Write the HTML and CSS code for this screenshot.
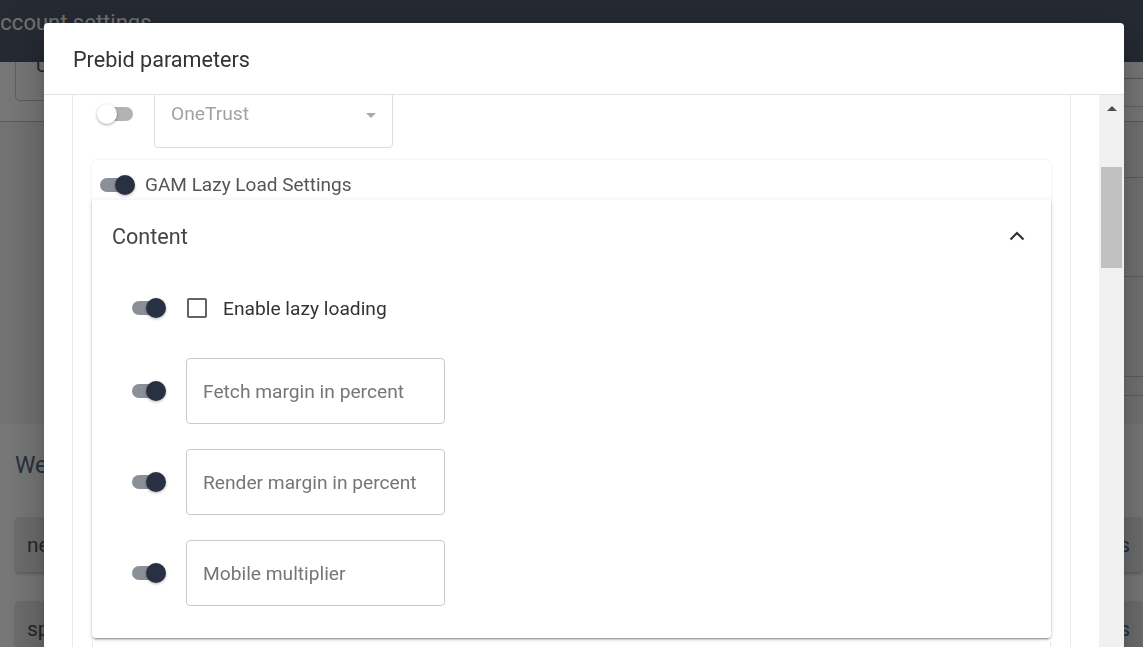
FILE: index.html
```html
<!DOCTYPE html>
<html lang="en">
<head>
<meta charset="utf-8">
<title>Prebid parameters</title>
<link rel="stylesheet" href="styles.css">
</head>
<body>
<div class="page">
  <header class="navbar"><span class="nav-title">Account settings</span></header>
  <div class="toolbar">
    <div class="tool-select"><span>Users</span></div>
    <div class="tool-right"></div>
  </div>
  <section class="settings-section">
    <div class="table">
      <div class="trow r1"></div>
      <div class="trow r2"></div>
      <div class="trow r3"></div>
      <div class="trow r4"></div>
    </div>
  </section>
  <section class="websites">
    <h2 class="websites-title">Websites</h2>
    <div class="site-item"><span class="site-name">news.example.com</span><span class="site-link">Settings</span></div>
    <div class="site-item"><span class="site-name">sport.example.com</span><span class="site-link">Settings</span></div>
  </section>
</div>

<div class="backdrop"></div>

<div class="dialog">
  <div class="dialog-header"><h1 class="dialog-title">Prebid parameters</h1></div>
  <div class="dialog-body">
    <div class="dialog-content">
      <div class="form-card">
        <div class="select-row">
          <div class="toggle off"><span class="track"></span><span class="knob"></span></div>
          <div class="select disabled">
            <span class="select-value">OneTrust</span>
            <span class="select-arrow"></span>
          </div>
        </div>

        <div class="gam-card">
          <div class="gam-header">
            <div class="toggle on wide"><span class="track"></span><span class="knob"></span></div>
            <span class="gam-label">GAM Lazy Load Settings</span>
          </div>
          <div class="panel">
            <div class="panel-header">
              <span class="panel-title">Content</span>
              <svg class="chevron" width="16" height="10" viewBox="0 0 16 10"><path d="M1.5 8.5 L8 2 L14.5 8.5" fill="none" stroke="#333" stroke-width="2.2"/></svg>
            </div>
            <div class="panel-body">
              <div class="field-row first">
                <div class="toggle on"><span class="track"></span><span class="knob"></span></div>
                <span class="checkbox"></span>
                <span class="check-label">Enable lazy loading</span>
              </div>
              <div class="field-row">
                <div class="toggle on"><span class="track"></span><span class="knob"></span></div>
                <input class="text-input" type="text" placeholder="Fetch margin in percent">
              </div>
              <div class="field-row">
                <div class="toggle on"><span class="track"></span><span class="knob"></span></div>
                <input class="text-input" type="text" placeholder="Render margin in percent">
              </div>
              <div class="field-row">
                <div class="toggle on"><span class="track"></span><span class="knob"></span></div>
                <input class="text-input" type="text" placeholder="Mobile multiplier">
              </div>
            </div>
          </div>
        </div>
        <div class="next-card"></div>
      </div>
    </div>
    <div class="scrollbar">
      <span class="scroll-up"></span>
      <span class="scroll-thumb"></span>
    </div>
  </div>
</div>
</body>
</html>
```

FILE: styles.css
```css
* { box-sizing: border-box; }

html, body {
  margin: 0;
  padding: 0;
  width: 1143px;
  height: 647px;
  overflow: hidden;
  font-family: Roboto, "Noto Sans", "Liberation Sans", sans-serif;
  background: #ffffff;
}

/* ---------- background page ---------- */
.page {
  width: 1143px;
  padding-top: 45px;
  background: #ffffff;
}

.navbar {
  position: fixed;
  top: 0;
  left: 0;
  right: 0;
  height: 62px;
  background: #51596c;
  z-index: 5;
  padding-top: 10px;
}

.nav-title {
  display: block;
  margin-left: -14px;
  font-size: 22px;
  line-height: 26px;
  color: #f2f2f2;
}

.toolbar {
  height: 77px;
  display: flex;
  justify-content: space-between;
  align-items: flex-start;
  padding-left: 15px;
  border-bottom: 1px solid #c4c4c4;
}

.tool-select {
  width: 300px;
  height: 56px;
  border: 1px solid #c9c9c9;
  border-radius: 5px;
  padding: 8px 0 0 20px;
  font-size: 19px;
  color: #5a4a3a;
}

.tool-right {
  width: 30px;
  height: 29px;
  margin-top: 33px;
  border-top: 1px solid #bdbdbd;
  border-bottom: 1px solid #d6d6d6;
}

.settings-section {
  height: 302px;
  background: #f4f4f4;
}

.table {
  margin-left: 60px;
}

.trow { border-bottom: 1px solid #c6c6c6; }
.r1 { height: 56px; }
.r2 { height: 99px; }
.r3 { height: 100px; }
.r4 { height: 19px; }

.websites {
  padding-top: 28px;
}

.websites-title {
  margin: 0 0 37px 15px;
  font-size: 23px;
  line-height: 28px;
  font-weight: 400;
  color: #56698a;
}

.site-item {
  margin-left: 15px;
  height: 55px;
  margin-bottom: 29px;
  display: flex;
  align-items: center;
  justify-content: space-between;
  padding: 0 13px 0 12px;
  background: #e9e9e9;
  border-radius: 4px;
  box-shadow: 0 2px 3px rgba(0, 0, 0, 0.2);
  font-size: 21px;
  color: #555555;
}

.site-link { color: #4a6a92; }

/* ---------- backdrop & dialog ---------- */
.backdrop {
  position: fixed;
  inset: 0;
  background: rgba(0, 0, 0, 0.53);
  z-index: 10;
}

.dialog {
  position: fixed;
  left: 44px;
  top: 23px;
  width: 1080px;
  height: 720px;
  background: #ffffff;
  border-radius: 4px;
  z-index: 11;
  display: flex;
  flex-direction: column;
  box-shadow: 0 11px 15px -7px rgba(0, 0, 0, 0.2),
              0 24px 38px 3px rgba(0, 0, 0, 0.14),
              0 9px 46px 8px rgba(0, 0, 0, 0.12);
}

.dialog-header {
  height: 72px;
  flex: none;
  display: flex;
  align-items: center;
  padding: 2px 0 0 29px;
  border-bottom: 1px solid #e2e2e2;
}

.dialog-title {
  margin: 0;
  font-size: 21.6px;
  font-weight: 400;
  color: #333333;
}

.dialog-body {
  flex: 1;
  display: flex;
  overflow: hidden;
}

.dialog-content {
  flex: 1;
  overflow: hidden;
  padding: 0 28px;
}

.form-card {
  margin-top: -24px;
  padding: 20px 19px 0;
  border: 1px solid #e9e9e9;
  border-radius: 4px;
  height: 700px;
}

/* select row */
.select-row {
  display: flex;
  align-items: flex-start;
  margin-left: 5px;
  gap: 21px;
}

.select-row .toggle { margin-top: 12px; }

.select {
  width: 239px;
  height: 56px;
  border: 1px solid #dcdcdc;
  border-radius: 4px;
  padding: 9px 16px 0 16px;
  display: flex;
  justify-content: space-between;
  align-items: flex-start;
}

.select-value {
  font-size: 19.2px;
  line-height: 23px;
  color: #a2a2a2;
}

.select-arrow {
  margin-top: 11px;
  width: 0;
  height: 0;
  border-left: 5px solid transparent;
  border-right: 5px solid transparent;
  border-top: 5px solid #ababab;
}

/* toggles */
.toggle {
  position: relative;
  flex: none;
  width: 34px;
  height: 20px;
}

.toggle.wide { width: 35px; }
.toggle.off { width: 36px; }

.track {
  position: absolute;
  left: 0;
  right: 2px;
  top: 3px;
  height: 14px;
  border-radius: 7px;
}

.knob {
  position: absolute;
  top: 0;
  width: 20px;
  height: 20px;
  border-radius: 50%;
  box-shadow: 0 1px 3px rgba(0, 0, 0, 0.3);
}

.toggle.on .track { background: #8b8f98; }
.toggle.on .knob { right: 0; background: #283142; }

.toggle.off .track { left: 2px; right: 0; background: #b3b3b3; }
.toggle.off .knob { left: 0; background: #ffffff; box-shadow: 0 1px 3px rgba(0, 0, 0, 0.35); }

/* GAM card */
.gam-card {
  margin-top: 12px;
  border-radius: 5px;
  box-shadow: 0 0 3px rgba(0, 0, 0, 0.09);
}

.gam-header {
  display: flex;
  align-items: center;
  gap: 10px;
  height: 40px;
  padding: 15px 8px 5px;
}

.gam-label {
  font-size: 19px;
  line-height: 22px;
  color: #555555;
}

.panel {
  border-radius: 0 0 4px 4px;
  background: #ffffff;
  box-shadow: 0 3px 1px -2px rgba(0, 0, 0, 0.2),
              0 2px 2px 0 rgba(0, 0, 0, 0.14),
              0 1px 5px 0 rgba(0, 0, 0, 0.12);
}

.panel-header {
  height: 72px;
  display: flex;
  align-items: center;
  justify-content: space-between;
  padding: 0 26px 0 20px;
}

.panel-title {
  font-size: 21.6px;
  color: #444444;
}

.chevron { display: block; }

.panel-body {
  display: flex;
  flex-direction: column;
  padding: 0 0 32px 40px;
}

.field-row {
  display: flex;
  align-items: center;
  gap: 20px;
  height: 66px;
  margin-top: 25px;
}

.field-row.first {
  height: 72px;
  margin-top: 0;
  margin-bottom: -11px;
}

.checkbox {
  flex: none;
  width: 20px;
  height: 20px;
  margin-left: 1px;
  border: 2px solid #636363;
  border-radius: 2px;
}

.check-label {
  margin-left: -4px;
  font-size: 19.2px;
  color: #333333;
}

.text-input {
  width: 259px;
  height: 66px;
  border: 1px solid #cbcbcb;
  border-radius: 4px;
  padding: 0 16px;
  font-family: Roboto, "Noto Sans", "Liberation Sans", sans-serif;
  font-size: 19.2px;
  color: #333333;
  background: #ffffff;
  outline: none;
}

.text-input::placeholder { color: #767676; opacity: 1; }

.next-card {
  margin-top: 4px;
  height: 40px;
  border-left: 1px solid #e4e4e4;
  border-right: 1px solid #e4e4e4;
}

/* scrollbar */
.scrollbar {
  flex: none;
  width: 25px;
  background: #f1f1f1;
  display: flex;
  flex-direction: column;
  align-items: center;
  padding-top: 11px;
}

.scroll-up {
  width: 0;
  height: 0;
  border-left: 5px solid transparent;
  border-right: 5px solid transparent;
  border-bottom: 5px solid #505050;
}

.scroll-thumb {
  margin-top: 56px;
  width: 21px;
  height: 101px;
  background: #c1c1c1;
}
```
